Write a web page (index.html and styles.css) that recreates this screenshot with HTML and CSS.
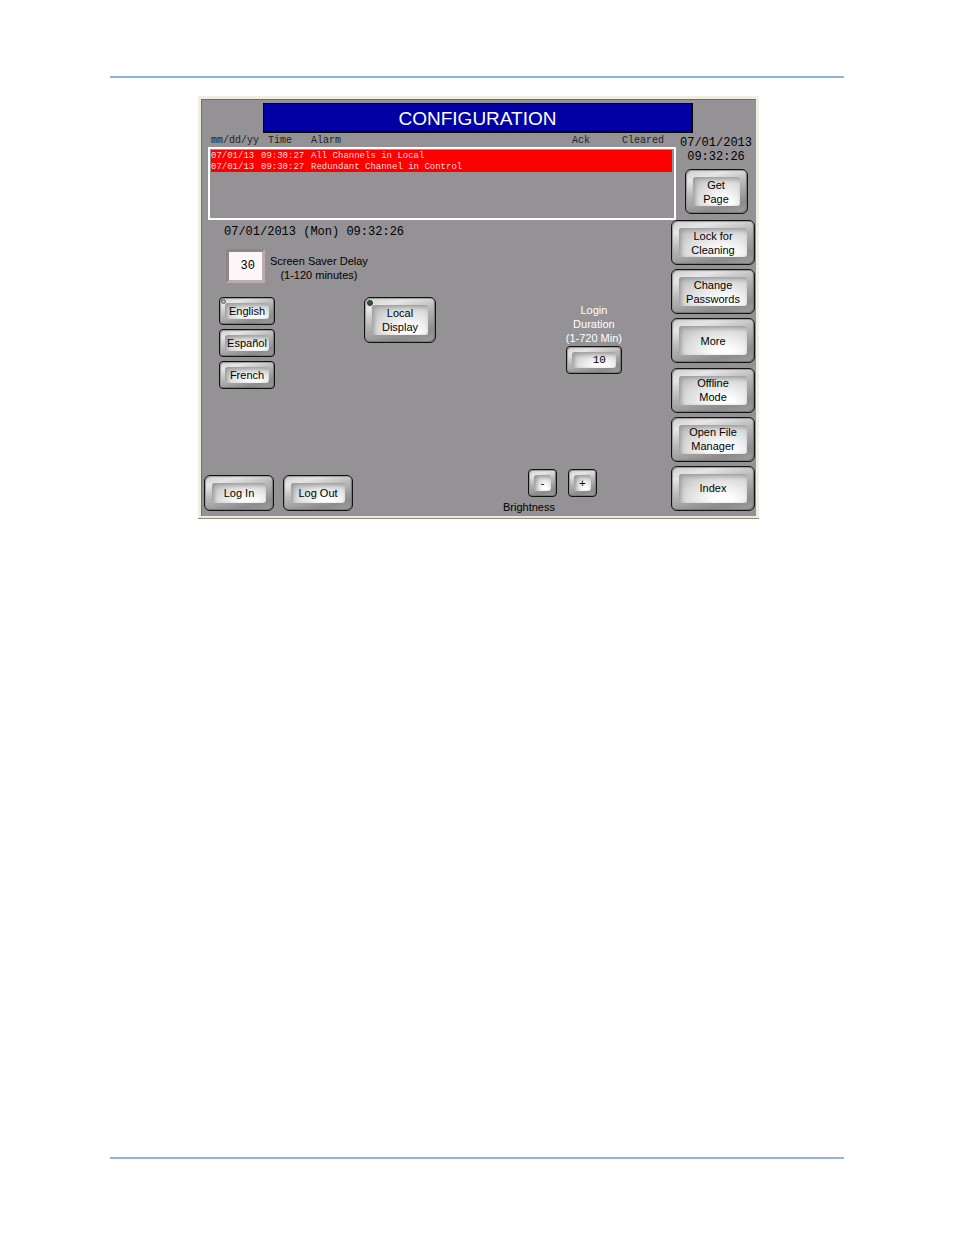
FILE: index.html
```html
<!DOCTYPE html>
<html lang="en">
<head>
  <meta charset="UTF-8">
  <meta name="viewport" content="width=device-width, initial-scale=1.0">
  <title>Configuration</title>
  <link rel="stylesheet" href="styles.css">
</head>
<body>
  <div class="page">
    <main class="screen">
      <div class="panel">
        <h1 class="title">CONFIGURATION</h1>

        <div class="top">
          <table class="alarms">
            <thead>
              <tr><th>mm/dd/yy</th><th class="time">Time</th><th>Alarm</th><th>Ack</th><th>Cleared</th></tr>
            </thead>
            <tbody>
              <tr><td>07/01/13</td><td>09:30:27</td><td>All Channels in Local</td><td></td><td></td></tr>
              <tr><td>07/01/13</td><td>09:30:27</td><td>Redundant Channel in Control</td><td></td><td></td></tr>
            </tbody>
          </table>
          <div class="clock">
            <div>07/01/2013</div>
            <div>09:32:26</div>
            <button class="key key-page"><span class="face">Get<br>Page</span></button>
          </div>
        </div>

        <div class="bottom">
          <div class="settings">
            <div class="date">07/01/2013 (Mon) 09:32:26</div>

            <div class="saver">
              <input type="text" id="saverDelay" value="30">
              <label for="saverDelay">Screen Saver Delay<br>(1-120 minutes)</label>
            </div>

            <div class="options">
              <div class="languages">
                <button class="key small"><i class="led off"></i><span class="face">English</span></button>
                <button class="key small"><span class="face">Español</span></button>
                <button class="key small"><span class="face">French</span></button>
              </div>
              <button class="key key-display"><i class="led"></i><span class="face">Local<br>Display</span></button>
              <div class="login">
                <label for="loginDuration">Login<br>Duration<br>(1-720 Min)</label>
                <div class="key small"><input class="face" type="text" id="loginDuration" value="10"></div>
              </div>
            </div>

            <div class="actions">
              <button class="key key-log"><span class="face">Log In</span></button>
              <button class="key key-log"><span class="face">Log Out</span></button>
              <div class="brightness">
                <div class="steps">
                  <button class="key small step"><span class="face">-</span></button>
                  <button class="key small step"><span class="face">+</span></button>
                </div>
                <div>Brightness</div>
              </div>
            </div>
          </div>

          <nav class="menu">
            <button class="key"><span class="face">Lock for<br>Cleaning</span></button>
            <button class="key"><span class="face">Change<br>Passwords</span></button>
            <button class="key"><span class="face">More</span></button>
            <button class="key"><span class="face">Offline<br>Mode</span></button>
            <button class="key"><span class="face">Open File<br>Manager</span></button>
            <button class="key"><span class="face">Index</span></button>
          </nav>
        </div>
      </div>
    </main>
  </div>
</body>
</html>
```
FILE: styles.css
```css
* {
  box-sizing: border-box;
}

body {
  margin: 0;
  background: white;
  font-family: "Liberation Sans", Arial, sans-serif;
  font-size: 11px;
  line-height: 14px;
  color: black;
}

.page {
  min-height: 100vh;
  padding: 76px 110px;
  display: flex;
}

.screen {
  flex: 1;
  padding: 18px 0 0 3px;
  border-top: 2px solid #8fb4dc;
  border-bottom: 2px solid #8fb4dc;
}

/* sunken window frame */
.panel {
  max-width: 561px;
  margin: 0 auto;
  padding-top: 4px;
  background: #949294;
  border: solid #f0eee2;
  border-width: 3px 3px 2px;
  border-bottom-color: #ece9d8;
  box-shadow: inset 1px 1px 0 #716f64, 0 1px 0 #8f8b7d;
}

.title {
  margin: 0 63px 0 62px;
  padding-top: 2px;
  border: 1px solid black;
  border-width: 1px 2px 2px 1px;
  background: #0000a4;
  color: white;
  font-size: 19px;
  font-weight: normal;
  line-height: 25px;
  text-align: center;
}

.top {
  display: flex;
}

/* alarm list */
.alarms {
  flex: 1;
  display: block;
  margin-left: 7px;
  font-family: "Liberation Mono", monospace;
}

.alarms thead,
.alarms tbody {
  display: block;
}

.alarms tr {
  display: grid;
  grid-template-columns: 50px 50px 1fr 50px 54px;
}

.alarms th,
.alarms td {
  padding: 0;
  text-align: left;
  white-space: nowrap;
}

.alarms th {
  font-size: 10px;
  font-weight: normal;
  line-height: 16px;
  color: #222;
}

.alarms thead {
  height: 14px;
  padding-left: 3px;
}

.alarms .time {
  padding-left: 7px;
}

.alarms tbody {
  height: 73px;
  padding: 1px 2px 1px 1px;
  border: 2px solid white;
}

.alarms tbody tr {
  height: 11px;
  background: red;
}

.alarms td {
  font-size: 9px;
  line-height: 13px;
  color: #ffdede;
}

.clock {
  width: 80px;
  padding-top: 3px;
  display: flex;
  flex-direction: column;
  align-items: center;
  font-family: "Liberation Mono", monospace;
  font-size: 12px;
}

.key-page {
  width: 63px;
  height: 45px;
  margin-top: 5px;
}

/* bevelled keys */
.key {
  position: relative;
  display: flex;
  padding: 7px;
  border: 1px solid #111;
  border-radius: 6px;
  background: linear-gradient(165deg, #d0d0d0, #e6e6e6 20%, #b8b8b8 45%, #8c8c8c 80%, #a0a0a0);
  box-shadow: inset 1px 1px 1px #999, inset -1px -1px 1px #777;
  font-family: "Liberation Sans", Arial, sans-serif;
  font-size: 11px;
  line-height: 14px;
  color: black;
}

.face {
  flex: 1;
  align-self: stretch;
  display: flex;
  align-items: center;
  justify-content: center;
  text-align: center;
  white-space: nowrap;
  border-radius: 3px;
  background: radial-gradient(ellipse at 65% 95%, #fff 15%, #dcdcdc 60%, #b4b4b4);
  box-shadow: inset 2px 2px 4px #999;
}

.small {
  width: 56px;
  height: 28px;
  padding: 5px;
  border-radius: 4px;
}

.led {
  position: absolute;
  top: 2px;
  left: 2px;
  width: 6px;
  height: 6px;
  border-radius: 50%;
  background: #2f5a34;
  border: 1px solid #1c3a20;
}

.led.off {
  top: 1px;
  left: 1px;
  width: 5px;
  height: 5px;
  background: #a9c2ab;
  border-color: #4b6b4e;
}

.bottom {
  display: flex;
}

.settings {
  flex: 1;
  display: flex;
  flex-direction: column;
  padding: 5px 0 2px 3px;
}

.date {
  padding-left: 20px;
  font-family: "Liberation Mono", monospace;
  font-size: 12px;
}

.saver {
  display: flex;
  align-items: center;
  gap: 5px;
  margin: 10px 0 0 22px;
  text-align: center;
}

.saver label {
  padding-top: 4px;
}

.saver input {
  width: 39px;
  height: 34px;
  padding: 0 7px 0 0;
  border: 3px solid;
  border-color: #8f8583 #b9adab #b9adab #8f8583;
  background: #fbf6f8;
  font-family: "Liberation Mono", monospace;
  font-size: 12px;
  text-align: right;
}

.options {
  display: flex;
  align-items: flex-start;
  margin: 14px 0 0 15px;
}

.languages {
  display: flex;
  flex-direction: column;
  gap: 4px;
}

.key-display {
  width: 72px;
  height: 46px;
  margin-left: 89px;
}

.login {
  margin: 6px 49px 0 auto;
  display: flex;
  flex-direction: column;
  align-items: center;
  gap: 1px;
  color: white;
  text-align: center;
}

.login input {
  width: 100%;
  min-width: 0;
  padding: 0 10px 0 0;
  border: 0;
  font-family: "Liberation Mono", monospace;
  font-size: 11px;
  text-align: right;
}

.actions {
  display: flex;
  align-items: flex-end;
  gap: 9px;
  margin-top: 80px;
}

.key-log {
  width: 70px;
  height: 36px;
  margin-bottom: 3px;
}

.brightness {
  margin: 0 74px 0 auto;
}

.steps {
  display: flex;
  gap: 11px;
  margin: 0 0 3px 25px;
}

.step {
  width: 29px;
}

.menu {
  width: 85px;
  display: flex;
  flex-direction: column;
  justify-content: space-between;
  padding: 0 1px 5px 0;
}

.menu .key {
  height: 45px;
}
```
